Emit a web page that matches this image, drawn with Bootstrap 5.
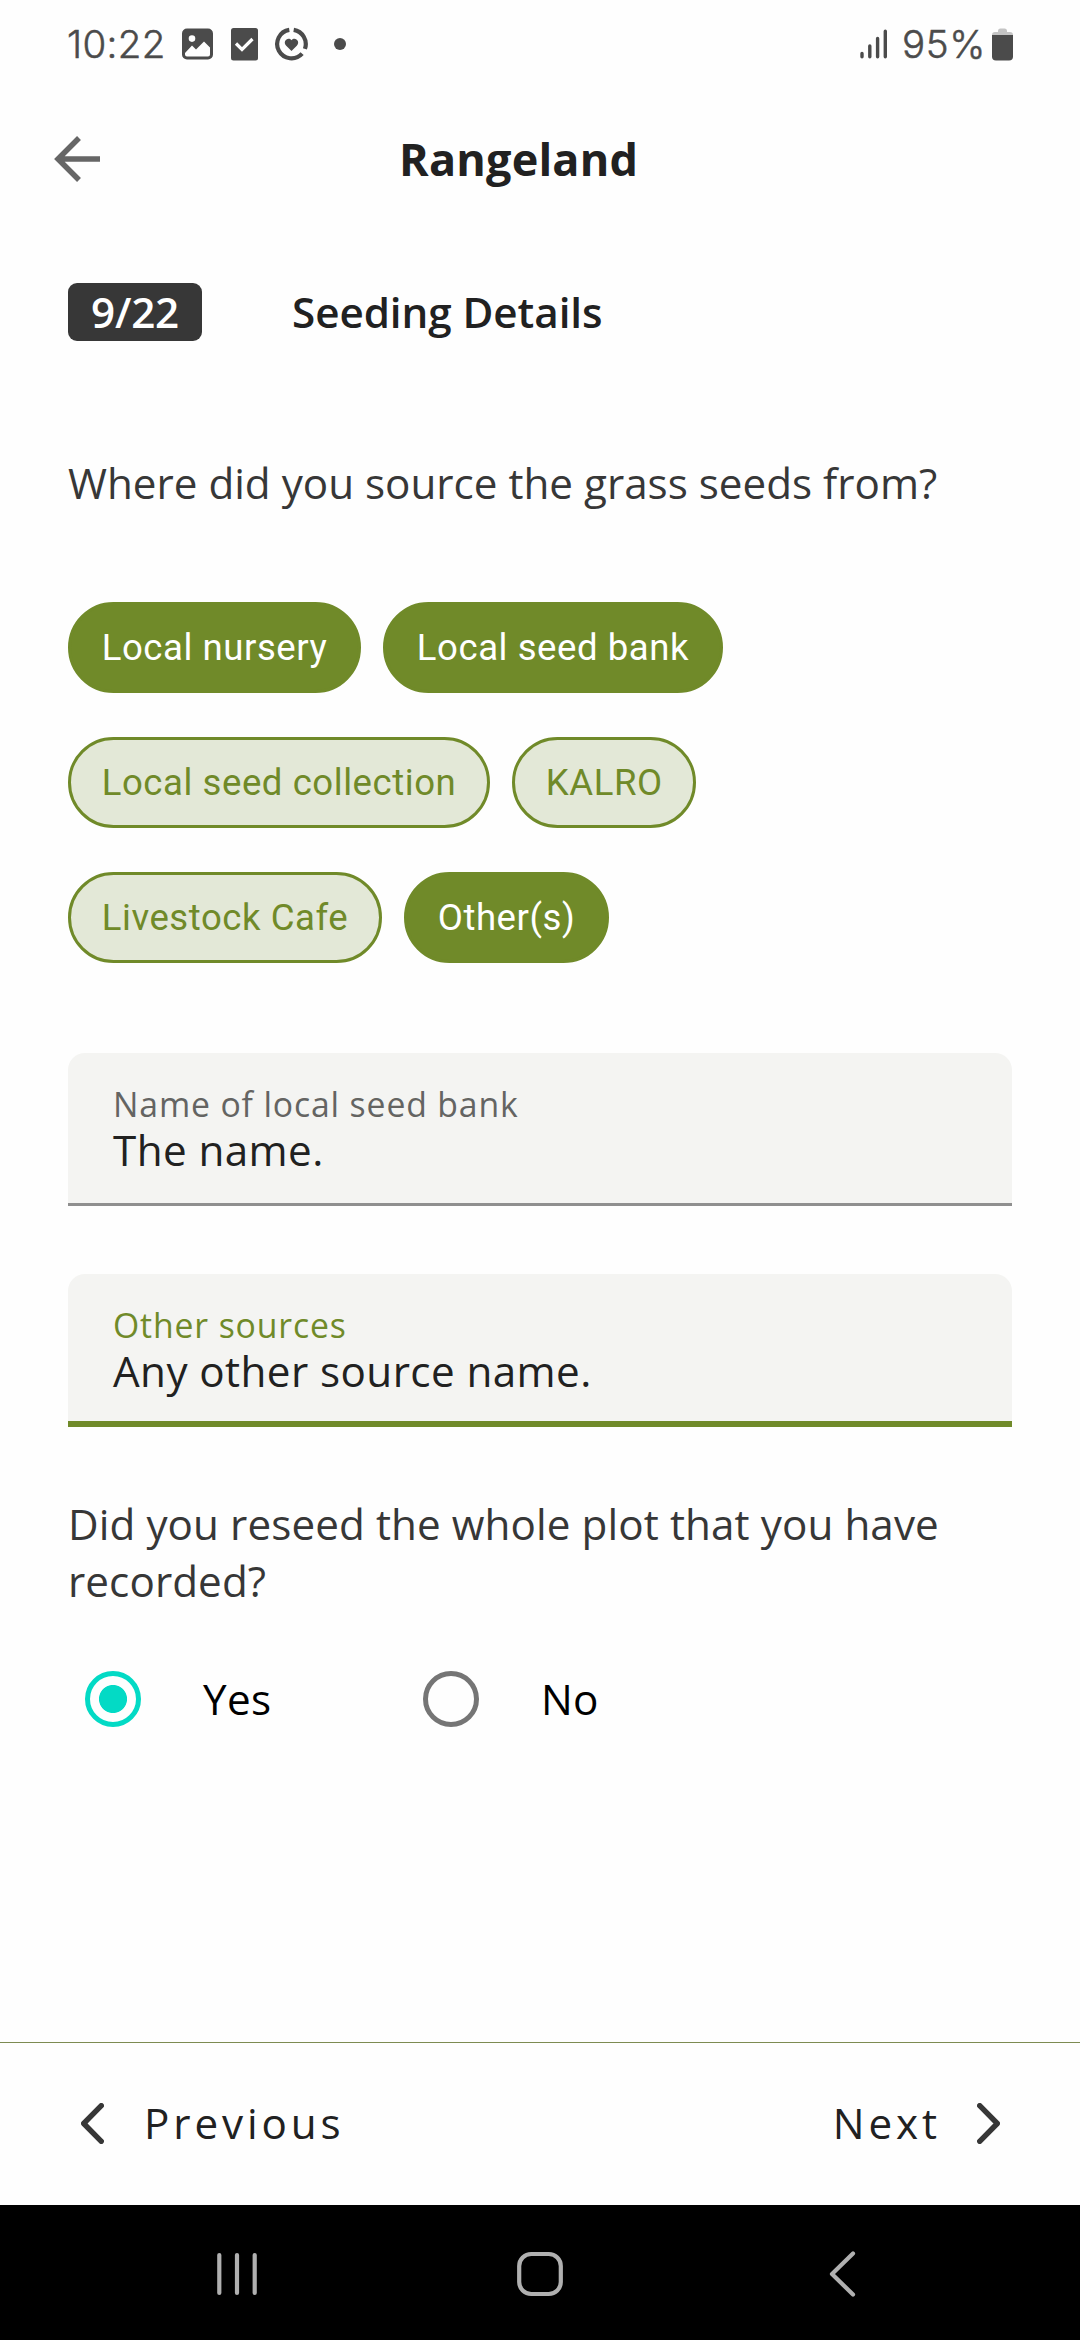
<!DOCTYPE html>
<html lang="en">
<head>
<meta charset="utf-8">
<meta name="viewport" content="width=device-width, initial-scale=1">
<title>Rangeland</title>
<link href="https://cdn.jsdelivr.net/npm/bootstrap@5.3.0/dist/css/bootstrap.min.css" rel="stylesheet">
<style>
  :root { --olive: #708a29; --ink: #212121; --slate: #373737; }
  body { font-family: "Open Sans", sans-serif; font-size: 42.19px; line-height: 57px; color: var(--slate); background: #fefefe; }
  svg { display: block; flex: none; }
  .screen { width: 1080px; height: 2340px; overflow: hidden; }
  .status-bar { height: 88px; padding: 0 67px 0 67px; font: 300 38.5px/46px Inter, sans-serif; color: #4b4b4b; -webkit-text-stroke: .5px #4b4b4b; }
  .clock { width: 115px; letter-spacing: .3px; }
  .charge { margin-left: 14px; width: 90px; letter-spacing: .6px; }
  .app-bar { height: 141px; padding-left: 54px; }
  .app-title { margin: 1px 0 0 299px; font-size: 45px; font-weight: 700; line-height: 60px; letter-spacing: .19px; color: var(--ink); }
  .page-body { padding: 54px 68px 0; }
  .step-badge { width: 134px; height: 58px; line-height: 57px; border-radius: 9px; background: var(--slate); font-size: 42.19px; font-weight: 600; letter-spacing: -.2px; padding: 0; }
  .step-name { margin: 0 0 1px 90px; font-size: 42.19px; font-weight: 600; line-height: 57px; letter-spacing: -.06px; color: var(--ink); }
  .question { margin: 113px 0 0; }
  .question-two { margin-top: 68px; letter-spacing: .09px; width: 900px; }
  .chip-list { margin-top: 91px; gap: 44px; }
  .chip { height: 91px; padding: 0 30.7px; border: 3px solid var(--olive); border-radius: 46px; background: #e3e8d7; color: var(--olive); font: 400 36.56px/85px Roboto, sans-serif; letter-spacing: .56px; white-space: nowrap; }
  .chip:hover { background: #e3e8d7; color: var(--olive); border-color: var(--olive); }
  .chip.active, .chip.active:hover { background: var(--olive); border-color: var(--olive); color: #fff; }
  .chip-row { gap: 22px; }
  .text-box { margin-top: 90px; height: 153px; padding: 28px 46px 0 45px; border-radius: 17px 17px 0 0; background: #f4f4f2; border-bottom: 3px solid #8f8f8f; }
  .text-box.is-focused { margin-top: 68px; border-bottom: 6px solid var(--olive); }
  .box-label { font-size: 33.75px; line-height: 46px; letter-spacing: .86px; color: #646462; }
  .is-focused .box-label { color: var(--olive); }
  .box-value { line-height: 46px; letter-spacing: .42px; color: var(--ink); }
  .answers { margin-top: 62px; padding-left: 17px; }
  .answer { width: 338px; min-height: 56px; padding: 0; margin: 0; color: #000; }
  .answer .form-check-input { width: 56px; height: 56px; margin: 0; float: none; border: 5.6px solid #757575; background: none; }
  .answer .form-check-input:checked { border-color: #03dac5; background: radial-gradient(circle, #03dac5 13.6px, transparent 14.4px); }
  .answer .form-check-label { margin: -2px 0 0 62px; letter-spacing: .3px; }
  .pager { margin-top: auto; height: 163px; padding: 0 80px 4px 81px; border-top: 1px solid #7d8b52; color: var(--ink); letter-spacing: 3.9px; }
  .pager svg { margin-top: 2px; }
  .pager-prev { gap: 40px; }
  .pager-next { gap: 36px; }
  .sys-nav { height: 135px; padding: 3px 0 0 217px; }
</style>
<script src="https://cdn.jsdelivr.net/npm/bootstrap@5.3.0/dist/js/bootstrap.bundle.min.js"></script>
</head>
<body>
<div class="screen d-flex flex-column">

  <div class="status-bar d-flex align-items-center justify-content-between">
    <div class="d-flex align-items-center">
      <span class="clock">10:22</span>
      <svg width="170" height="34" viewBox="0 0 170 34" fill="#4b4b4b">
        <path fill-rule="evenodd" d="M5 1.500h21a5 5 0 0 1 5 5v21a5 5 0 0 1-5 5H5a5 5 0 0 1-5-5v-21a5 5 0 0 1 5-5zM3 26v1.500q0 2 2 2h21q2 0 2-2v-7L22 14.500l-8 8-4-4zM10 8.300a3.300 3.300 0 1 0 0 6.600 3.300 3.300 0 0 0 0-6.600z"/>
        <rect x="49" y="1" width="27" height="32.500" rx="2.500"/>
        <path d="M54 16.500l6 6L70.500 12" fill="none" stroke="#fefefe" stroke-width="3.200"/>
        <path d="M111.700 2.900A14.300 14.300 0 0 1 122.900 21.900M120.100 26.600A14.300 14.300 0 1 1 107.300 2.900" fill="none" stroke="#4b4b4b" stroke-width="4.200"/>
        <path d="M109.500 24l-5.300-5.200c-4-4.200 1.600-9.700 5.300-5.600 3.700-4.100 9.300 1.400 5.300 5.600z"/>
        <circle cx="158" cy="17" r="6"/>
      </svg>
    </div>
    <div class="d-flex align-items-center">
      <svg width="28" height="30" viewBox="0 0 28 30" fill="none" stroke="#4b4b4b" stroke-width="3.400" stroke-linecap="round">
        <path d="M2 24.500v3.300M9.800 17v10.800M17.600 9.500v18.300M25.300 2.200v25.600"/>
      </svg>
      <span class="charge">95%</span>
      <svg width="21" height="33" viewBox="0 0 21 33">
        <path d="M6 3q0-2.500 2.500-2.500h4q2.500 0 2.500 2.500v1h3q3 0 3 3H0q0-3 3-3h3z" fill="#c4c4c4"/>
        <path d="M0 7h21v21.500q0 4-4 4H4q-4 0-4-4z" fill="#4b4b4b"/>
      </svg>
    </div>
  </div>

  <header class="app-bar d-flex align-items-center">
    <svg width="46" height="46" viewBox="0 0 46 46" fill="none" stroke="#666" stroke-width="5.500">
      <path d="M46 23H5M25 2L4 23l21 21"/>
    </svg>
    <h1 class="app-title">Rangeland</h1>
  </header>

  <main class="page-body">
    <div class="d-flex align-items-center">
      <span class="badge step-badge">9/22</span>
      <h2 class="step-name">Seeding Details</h2>
    </div>

    <p class="question">Where did you source the grass seeds from?</p>

    <div class="chip-list d-flex flex-column">
      <div class="chip-row d-flex">
        <button class="btn chip active">Local nursery</button>
        <button class="btn chip active">Local seed bank</button>
      </div>
      <div class="chip-row d-flex">
        <button class="btn chip">Local seed collection</button>
        <button class="btn chip">KALRO</button>
      </div>
      <div class="chip-row d-flex">
        <button class="btn chip">Livestock Cafe</button>
        <button class="btn chip active">Other(s)</button>
      </div>
    </div>

    <div class="text-box">
      <div class="box-label">Name of local seed bank</div>
      <div class="box-value">The name.</div>
    </div>
    <div class="text-box is-focused">
      <div class="box-label">Other sources</div>
      <div class="box-value">Any other source name.</div>
    </div>

    <p class="question question-two">Did you reseed the whole plot that you have recorded?</p>

    <div class="answers d-flex">
      <div class="form-check answer d-flex align-items-center">
        <input class="form-check-input" type="radio" name="reseed" id="reseed-yes" checked>
        <label class="form-check-label" for="reseed-yes">Yes</label>
      </div>
      <div class="form-check answer d-flex align-items-center">
        <input class="form-check-input" type="radio" name="reseed" id="reseed-no">
        <label class="form-check-label" for="reseed-no">No</label>
      </div>
    </div>
  </main>

  <nav class="pager d-flex align-items-center justify-content-between">
    <div class="pager-prev d-flex align-items-center">
      <svg width="23" height="41" viewBox="0 0 23 41" fill="none" stroke="#373737" stroke-width="5.400" stroke-linecap="round" stroke-linejoin="round"><path d="M20.300 2.700L2.700 20.500l17.600 17.800"/></svg>
      <span>Previous</span>
    </div>
    <div class="pager-next d-flex align-items-center">
      <span>Next</span>
      <svg width="23" height="41" viewBox="0 0 23 41" fill="none" stroke="#373737" stroke-width="5.400" stroke-linecap="round" stroke-linejoin="round"><path d="M2.700 2.700l17.600 17.800L2.700 38.300"/></svg>
    </div>
  </nav>

  <div class="sys-nav bg-black d-flex align-items-center">
    <svg width="640" height="48" viewBox="0 0 640 48" fill="none" stroke="#b0b0b0" stroke-width="4.200" stroke-linecap="round" stroke-linejoin="round">
      <path d="M2.300 5v38M20 5v38M37.700 5v38"/>
      <rect x="302.200" y="4" width="41.600" height="40" rx="12"/>
      <path d="M636 3.500L615 24l21 20.500"/>
    </svg>
  </div>
</div>
</body>
</html>
